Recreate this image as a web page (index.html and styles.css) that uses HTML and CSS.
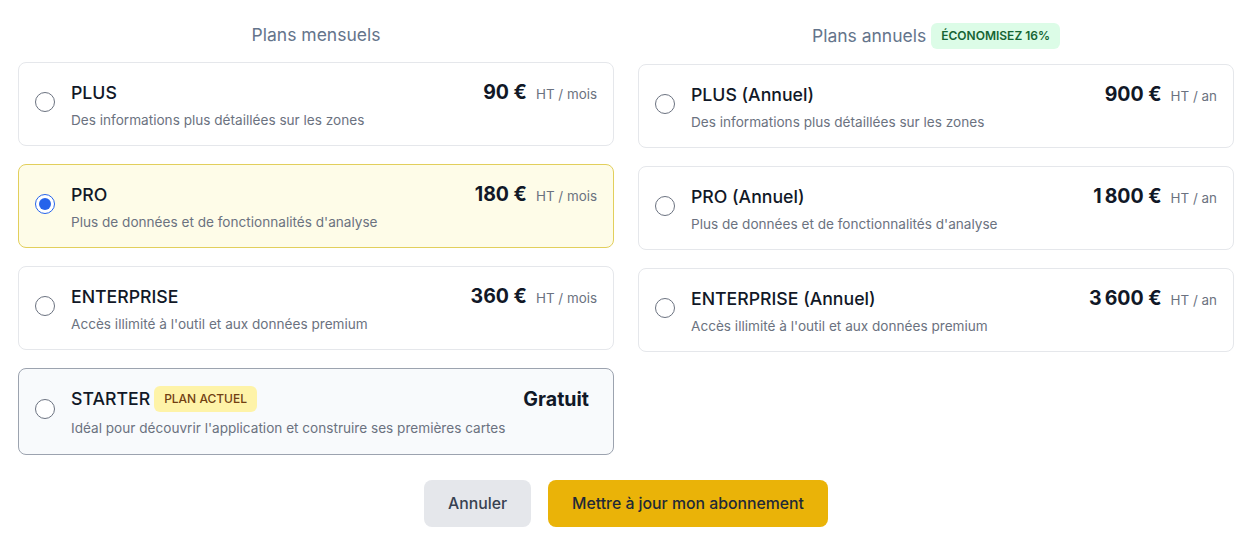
FILE: index.html
```html
<!DOCTYPE html>
<html lang="fr">
<head>
<meta charset="utf-8">
<title>Plans</title>
<link rel="stylesheet" href="styles.css">
</head>
<body>
<div class="page">
  <div class="columns">
    <section class="col">
      <div class="col-head"><h2>Plans mensuels</h2></div>
      <div class="cards">
        <label class="card">
          <span class="radio"></span>
          <div class="body">
            <div class="row"><span class="title">PLUS</span><span class="price"><b>90 €</b><small>HT / mois</small></span></div>
            <p class="desc">Des informations plus détaillées sur les zones</p>
          </div>
        </label>
        <label class="card selected">
          <span class="radio checked"></span>
          <div class="body">
            <div class="row"><span class="title">PRO</span><span class="price"><b>180 €</b><small>HT / mois</small></span></div>
            <p class="desc">Plus de données et de fonctionnalités d'analyse</p>
          </div>
        </label>
        <label class="card">
          <span class="radio"></span>
          <div class="body">
            <div class="row"><span class="title">ENTERPRISE</span><span class="price"><b>360 €</b><small>HT / mois</small></span></div>
            <p class="desc">Accès illimité à l'outil et aux données premium</p>
          </div>
        </label>
        <label class="card current">
          <span class="radio"></span>
          <div class="body">
            <div class="row row-tall"><span class="title">STARTER <span class="tag-current">PLAN ACTUEL</span></span><span class="free">Gratuit</span></div>
            <p class="desc">Idéal pour découvrir l'application et construire ses premières cartes</p>
          </div>
        </label>
      </div>
    </section>
    <section class="col">
      <div class="col-head"><h2>Plans annuels</h2><span class="tag-save">ÉCONOMISEZ 16%</span></div>
      <div class="cards">
        <label class="card">
          <span class="radio"></span>
          <div class="body">
            <div class="row"><span class="title">PLUS (Annuel)</span><span class="price"><b>900 €</b><small>HT / an</small></span></div>
            <p class="desc">Des informations plus détaillées sur les zones</p>
          </div>
        </label>
        <label class="card">
          <span class="radio"></span>
          <div class="body">
            <div class="row"><span class="title">PRO (Annuel)</span><span class="price"><b>1&#8239;800 €</b><small>HT / an</small></span></div>
            <p class="desc">Plus de données et de fonctionnalités d'analyse</p>
          </div>
        </label>
        <label class="card">
          <span class="radio"></span>
          <div class="body">
            <div class="row"><span class="title">ENTERPRISE (Annuel)</span><span class="price"><b>3&#8239;600 €</b><small>HT / an</small></span></div>
            <p class="desc">Accès illimité à l'outil et aux données premium</p>
          </div>
        </label>
      </div>
    </section>
  </div>
  <div class="actions">
    <button class="btn btn-cancel">Annuler</button>
    <button class="btn btn-primary">Mettre à jour mon abonnement</button>
  </div>
</div>
</body>
</html>
```

FILE: styles.css
```css
* { box-sizing: border-box; }
html, body { margin: 0; padding: 0; background: #ffffff; }
body {
  font-family: Inter, "Noto Sans", "Liberation Sans", sans-serif;
  color: #111827;
}
.page {
  padding: 23px 26px 0 18px;
}
.columns {
  display: grid;
  grid-template-columns: 1fr 1fr;
  gap: 24px;
  align-items: start;
}
.col-head {
  display: flex;
  justify-content: center;
  align-items: center;
  gap: 5px;
  min-height: 24px;
  margin-bottom: 15px;
}
.col-head h2 {
  margin: 0;
  font-size: 17.5px;
  line-height: 24px;
  font-weight: 400;
  color: #64748b;
}
.tag-save {
  background: #dcfce7;
  color: #166534;
  font-size: 12px;
  font-weight: 600;
  line-height: 18px;
  padding: 4px 10px;
  border-radius: 6px;
}
.cards {
  display: flex;
  flex-direction: column;
  gap: 18px;
}
.card {
  display: flex;
  align-items: center;
  gap: 16px;
  border: 1px solid #e5e7eb;
  border-radius: 8px;
  padding: 17px 16px 15px 16px;
  background: #fff;
}
.card.selected {
  background: #fefce8;
  border-color: #e2cf5c;
}
.card.current {
  background: #f8fafc;
  border-color: #9ca3af;
  padding-bottom: 16px;
}
.radio {
  flex: none;
  width: 20px;
  height: 20px;
  border-radius: 50%;
  border: 1px solid #6b7280;
  background: #fff;
  margin-bottom: 6px;
  position: relative;
}
.radio.checked {
  border-color: #2563eb;
}
.radio.checked::after {
  content: "";
  position: absolute;
  left: 3px;
  top: 3px;
  width: 12px;
  height: 12px;
  border-radius: 50%;
  background: #2563eb;
}
.body {
  flex: 1;
  min-width: 0;
}
.row {
  display: flex;
  justify-content: space-between;
  align-items: baseline;
  height: 24px;
}
.row-tall {
  height: 26px;
  align-items: center;
}
.title {
  font-size: 17.7px;
  line-height: 24px;
  font-weight: 500;
  color: #111827;
  display: flex;
  align-items: center;
  gap: 4px;
}
.price {
  line-height: 24px;
}
.price b {
  font-size: 19.5px;
  line-height: 24px;
  font-weight: 700;
  color: #111827;
  margin-right: 9px;
}
.price small {
  font-size: 13.4px;
  line-height: 24px;
  color: #6b7280;
}
.free {
  font-size: 19.6px;
  line-height: 26px;
  font-weight: 700;
  color: #111827;
  margin-right: 8px;
}
.tag-current {
  background: #fef3a8;
  color: #713f12;
  font-size: 12px;
  font-weight: 500;
  line-height: 18px;
  padding: 4px 10px;
  border-radius: 6px;
}
.desc {
  margin: 6px 0 0 0;
  font-size: 13.6px;
  line-height: 20px;
  color: #6b7280;
}
.actions {
  display: flex;
  justify-content: center;
  gap: 17px;
  margin-top: 25px;
}
.btn {
  font-family: inherit;
  font-size: 15.8px;
  line-height: 23px;
  font-weight: 500;
  border: none;
  border-radius: 8px;
  padding: 12px 24px;
}
.btn-cancel {
  background: #e5e7eb;
  color: #374151;
}
.btn-primary {
  background: #eab308;
  color: #1f2937;
}
```
